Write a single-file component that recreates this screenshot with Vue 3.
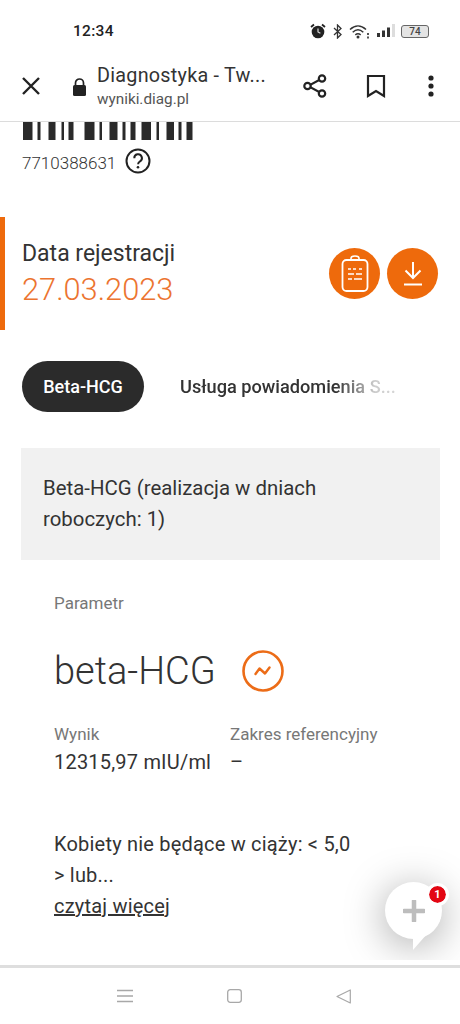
<script setup>
const bars = [[0,9.5],[14.5,3],[25.5,7],[38.5,2.5],[45.5,5],[61.5,10],[76.5,2.5],[86.5,8],[99.5,3],[107.5,5],[118.5,9.5],[133.5,2.5],[143.5,7.5],[155.5,3],[163.5,6]]
</script>

<template>
  <div class="phone">
    <div class="status">
      <span class="time">12:34</span>
      <div class="status-icons">
        <svg width="18" height="16" viewBox="0 0 18 16" class="alarm">
          <circle cx="9" cy="9" r="6.3" fill="#222"/>
          <path d="M9 5.5V9l2.4 1.3" stroke="#ddd" stroke-width="1.2" fill="none"/>
          <path d="M2 4 5 1.5M16 4l-3-2.5" stroke="#222" stroke-width="1.8"/>
        </svg>
        <svg width="10" height="15" viewBox="0 0 10 15" class="bt">
          <path d="M1 4l7 6.5-3.5 3.500V1L8 4.500 1 11" stroke="#333" stroke-width="1.300" fill="none"/>
        </svg>
        <svg width="20" height="15" viewBox="0 0 20 15" class="wifi">
          <path d="M1 5.500C6 .8 12 .8 17 5.500M3.700 8.200C7 5.200 11 5.200 14.300 8.200M6.300 10.800C8 9.500 10 9.500 11.700 10.800" stroke="#333" stroke-width="1.500" fill="none"/>
          <circle cx="9" cy="13" r="1.500" fill="#333"/>
          <rect x="18" y="9" width="2" height="2" fill="#555"/>
          <rect x="18" y="12.500" width="2" height="2" fill="#555"/>
        </svg>
        <svg width="18" height="14" viewBox="0 0 18 14" class="signal">
          <rect x="0" y="9" width="3" height="4" fill="#333"/>
          <rect x="5" y="6.500" width="3" height="6.500" fill="#333"/>
          <rect x="10" y="3.500" width="3" height="9.500" fill="#333"/>
          <rect x="15" y="0" width="3" height="13" fill="#ddd"/>
        </svg>
        <div class="battery"><span>74</span></div>
      </div>
    </div>

    <header class="toolbar">
      <svg class="close" width="20" height="20" viewBox="0 0 20 20">
        <path d="M2 2l16 16M18 2 2 18" stroke="#222" stroke-width="2.400" fill="none"/>
      </svg>
      <svg class="lock" width="15" height="18" viewBox="0 0 15 18">
        <path d="M3.500 7V5a4 4 0 0 1 8 0v2" stroke="#222" stroke-width="1.700" fill="none"/>
        <rect x="1" y="7" width="13" height="11" rx="1.500" fill="#222"/>
      </svg>
      <div class="title-box">
        <div class="title">Diagnostyka - Tw...</div>
        <div class="url">wyniki.diag.pl</div>
      </div>
      <svg class="share" width="26" height="26" viewBox="0 0 26 26">
        <path d="M20 5.500 6 13l14 7.500" stroke="#222" stroke-width="2" fill="none"/>
        <circle cx="20" cy="5.500" r="3.200" fill="#fff" stroke="#222" stroke-width="2.200"/>
        <circle cx="5.500" cy="13" r="3.200" fill="#fff" stroke="#222" stroke-width="2.200"/>
        <circle cx="20" cy="20.500" r="3.200" fill="#fff" stroke="#222" stroke-width="2.200"/>
      </svg>
      <svg class="bookmark" width="20" height="24" viewBox="0 0 20 24">
        <path d="M2 2h16v20l-8-5-8 5z" stroke="#222" stroke-width="2.200" fill="none"/>
      </svg>
      <svg class="more" width="6" height="22" viewBox="0 0 6 22">
        <circle cx="3" cy="3" r="2.600" fill="#222"/>
        <circle cx="3" cy="11" r="2.600" fill="#222"/>
        <circle cx="3" cy="19" r="2.600" fill="#222"/>
      </svg>
    </header>

    <main class="content">
      <svg class="barcode" width="170" height="18" viewBox="0 0 170 18">
        <rect v-for="b in bars" :key="b[0]" :x="b[0]" y="0" :width="b[1]" height="18" fill="#2a2a2a"/>
      </svg>
      <div class="code-row">
        <span class="code">7710388631</span>
        <svg width="26" height="26" viewBox="0 0 26 26">
          <circle cx="13" cy="13" r="11.500" fill="none" stroke="#222" stroke-width="2"/>
          <path d="M9.300 10.200a3.800 3.800 0 1 1 5.800 3.100c-1.300.9-2 1.500-2 3" fill="none" stroke="#222" stroke-width="2"/>
          <circle cx="13" cy="19.300" r="1.300" fill="#222"/>
        </svg>
      </div>

      <section class="reg">
        <div class="reg-text">
          <div class="reg-label">Data rejestracji</div>
          <div class="reg-date">27.03.2023</div>
        </div>
        <div class="reg-btns">
          <div class="round">
            <svg width="28" height="38" viewBox="0 0 28 38">
              <rect x="1.500" y="5" width="25" height="31" rx="4" fill="none" stroke="#fff" stroke-width="1.800"/>
              <path d="M10 5V3.500a4 2.500 0 0 1 8 0V5" fill="none" stroke="#fff" stroke-width="1.600"/>
              <path d="M7 14h3M12 14h3M18 14h3M7 19h6M15 19h6M7 24h4M13 24h8" stroke="#fff" stroke-width="1.500"/>
            </svg>
          </div>
          <div class="round">
            <svg width="22" height="26" viewBox="0 0 22 26">
              <path d="M11 1v15M3.500 9.500 11 17l7.500-7.500" stroke="#fff" stroke-width="2" fill="none"/>
              <path d="M2 23.500h18" stroke="#fff" stroke-width="2"/>
            </svg>
          </div>
        </div>
      </section>

      <nav class="tabs">
        <div class="pill">Beta-HCG</div>
        <div class="tab-next">Usługa powiadomienia S...</div>
      </nav>

      <div class="banner">Beta-HCG (realizacja w dniach roboczych: 1)</div>

      <section class="param">
        <div class="muted">Parametr</div>
        <div class="param-head">
          <span class="param-name">beta-HCG</span>
          <svg width="42" height="42" viewBox="0 0 42 42">
            <circle cx="21" cy="21" r="19.500" fill="none" stroke="#ec6c17" stroke-width="2.600"/>
            <path d="M13.500 24 17.500 18.500l5.500 5 4.500-6" fill="none" stroke="#ec6c17" stroke-width="2.400" stroke-linecap="round" stroke-linejoin="round"/>
          </svg>
        </div>
        <div class="result">
          <div class="col-a">
            <div class="muted">Wynik</div>
            <div class="val">12315,97 mIU/ml</div>
          </div>
          <div>
            <div class="muted">Zakres referencyjny</div>
            <div class="val">–</div>
          </div>
        </div>
        <p class="note">Kobiety nie będące w ciąży: &lt; 5,0<br>&gt; lub...<br><a class="more-link">czytaj więcej</a></p>
      </section>
    </main>

    <footer class="navbar">
      <div class="nav-rule"></div>
      <div class="nav-icons">
        <svg width="16" height="14" viewBox="0 0 16 14">
          <path d="M0 1.500h16M0 7h16M0 12.500h16" stroke="#a8a8a8" stroke-width="1.300"/>
        </svg>
        <svg width="15" height="14" viewBox="0 0 15 14">
          <rect x=".7" y=".7" width="13.600" height="12.600" rx="2.500" fill="none" stroke="#a8a8a8" stroke-width="1.300"/>
        </svg>
        <svg width="15" height="15" viewBox="0 0 15 15">
          <path d="M14.300 1v13L1 7.500z" fill="none" stroke="#a8a8a8" stroke-width="1.200" stroke-linejoin="round"/>
        </svg>
      </div>
    </footer>

    <div class="fab">
      <div class="fab-tail"></div>
      <svg class="plus" width="22" height="22" viewBox="0 0 22 22">
        <path d="M11 1v20M1 11h20" stroke="#bdbdbd" stroke-width="4.500" stroke-linecap="round"/>
      </svg>
      <span class="badge">1</span>
    </div>
  </div>
</template>

<style>
html, body { margin: 0; background: #fff; }
</style>

<style scoped>
.phone {
  position: relative;
  width: 460px;
  height: 1024px;
  overflow: hidden;
  display: flex;
  flex-direction: column;
  background: #fff;
  color: #2b2b2b;
  font-family: Roboto, "Liberation Sans", sans-serif;
}
.status {
  height: 50px;
  flex: none;
  display: flex;
  align-items: center;
  justify-content: space-between;
  padding: 12px 31px 0 73px;
  box-sizing: border-box;
}
.time { font-size: 15.5px; font-weight: 500; letter-spacing: .3px; color: #222; }
.status-icons { display: flex; align-items: center; }
.alarm { margin-right: 6px; }
.bt { margin-right: 6px; }
.wifi { margin-right: 8px; }
.signal { margin-right: 6px; }
.battery {
  width: 26px;
  height: 11px;
  border: 1px solid #666;
  border-radius: 3px;
  background: #e4e4e4;
  display: flex;
  align-items: center;
  justify-content: center;
  font-size: 10px;
  font-weight: 500;
  color: #444;
}
.toolbar {
  height: 72px;
  flex: none;
  box-sizing: border-box;
  display: flex;
  align-items: center;
  border-bottom: 1px solid #dcdcdc;
  padding-left: 21px;
}
.close { margin-right: 31px; }
.lock { margin-right: 10px; margin-top: 3px; }
.title-box { width: 205px; }
.title { font-size: 19.8px; line-height: 26px; color: #333; white-space: nowrap; letter-spacing: .25px; }
.url { font-size: 15.3px; line-height: 20px; color: #555; }
.bookmark { margin-left: 38px; }
.more { margin-left: 42px; }

.content { flex: 1; min-height: 0; overflow: hidden; }
.barcode { display: block; margin: 0 0 0 22.500px; }
.code-row {
  display: flex;
  align-items: center;
  margin: 8px 0 0 22px;
  height: 26px;
  gap: 9px;
}
.code { font-size: 17px; font-weight: 300; color: #333; margin-top: 4px; }
.reg {
  margin-top: 43px;
  height: 113px;
  border-left: 5px solid #ee6a0c;
  display: flex;
  align-items: center;
  box-sizing: border-box;
  padding-left: 17px;
}
.reg-text { flex: 1; }
.reg-label { font-size: 23px; line-height: 32px; color: #333; }
.reg-date { font-size: 30.8px; font-weight: 300; line-height: 38px; color: #ec7430; margin-top: 1px; }
.reg-btns { display: flex; gap: 7px; margin-right: 22px; }
.round {
  width: 51px;
  height: 51px;
  border-radius: 50%;
  background: #ee6a0c;
  display: flex;
  align-items: center;
  justify-content: center;
}
.tabs {
  margin: 31px 0 0 22px;
  height: 51px;
  display: flex;
  align-items: center;
}
.pill {
  width: 122px;
  height: 51px;
  flex: none;
  border-radius: 26px;
  background: #2b2b2b;
  color: #fff;
  font-size: 18px;
  font-weight: 500;
  display: flex;
  align-items: center;
  justify-content: center;
}
.tab-next {
  margin-left: 36px;
  font-size: 18.2px;
  font-weight: 500;
  color: #333;
  white-space: nowrap;
  -webkit-mask-image: linear-gradient(90deg, #000 72%, rgba(0,0,0,.25) 90%, rgba(0,0,0,.2) 100%);
  mask-image: linear-gradient(90deg, #000 72%, rgba(0,0,0,.25) 90%, rgba(0,0,0,.2) 100%);
}
.banner {
  margin: 36px 20px 0 21px;
  height: 112px;
  box-sizing: border-box;
  padding: 25px 40px 25px 22px;
  background: #f1f1f1;
  font-size: 20.4px;
  line-height: 31px;
  color: #333;
}
.param { padding: 33px 0 0 54px; }
.muted { font-size: 17px; line-height: 20px; color: #777; }
.param-head {
  display: flex;
  align-items: center;
  height: 42px;
  margin-top: 37px;
  gap: 26px;
}
.param-name { font-size: 38px; font-weight: 300; color: #333; }
.result { display: flex; margin-top: 32px; }
.col-a { width: 176px; }
.val { font-size: 20px; letter-spacing: .2px; line-height: 26px; margin-top: 5px; color: #333; }
.note { margin: 54px 0 0; font-size: 20px; letter-spacing: .2px; line-height: 31px; color: #333; }
.more-link { text-decoration: underline; }

.navbar {
  position: relative;
  z-index: 2;
  height: 64px;
  flex: none;
  box-sizing: border-box;
  padding-top: 5px;
  background: #fff;
  display: flex;
  flex-direction: column;
}
.nav-rule { height: 3px; background: #dedede; flex: none; }
.nav-icons {
  flex: 1;
  display: flex;
  align-items: center;
  justify-content: space-between;
  padding: 0 109px 0 117px;
}
.fab {
  position: absolute;
  left: 385px;
  top: 882px;
  width: 57px;
  height: 57px;
  border-radius: 50%;
  background: #fff;
  box-shadow: 0 6px 42px rgba(0,0,0,.36);
  display: flex;
  align-items: center;
  justify-content: center;
}
.fab-tail {
  position: absolute;
  left: 28px;
  top: 36px;
  width: 28px;
  height: 32px;
  background: #fff;
  clip-path: polygon(0 0, 100% 0, 0 100%);
}
.plus { position: relative; }
.badge {
  position: absolute;
  left: 44px;
  top: 4px;
  width: 17px;
  height: 17px;
  border-radius: 50%;
  background: #e30613;
  outline: 3px solid #fff;
  color: #fff;
  font-size: 11px;
  font-weight: 700;
  display: flex;
  align-items: center;
  justify-content: center;
}
</style>
